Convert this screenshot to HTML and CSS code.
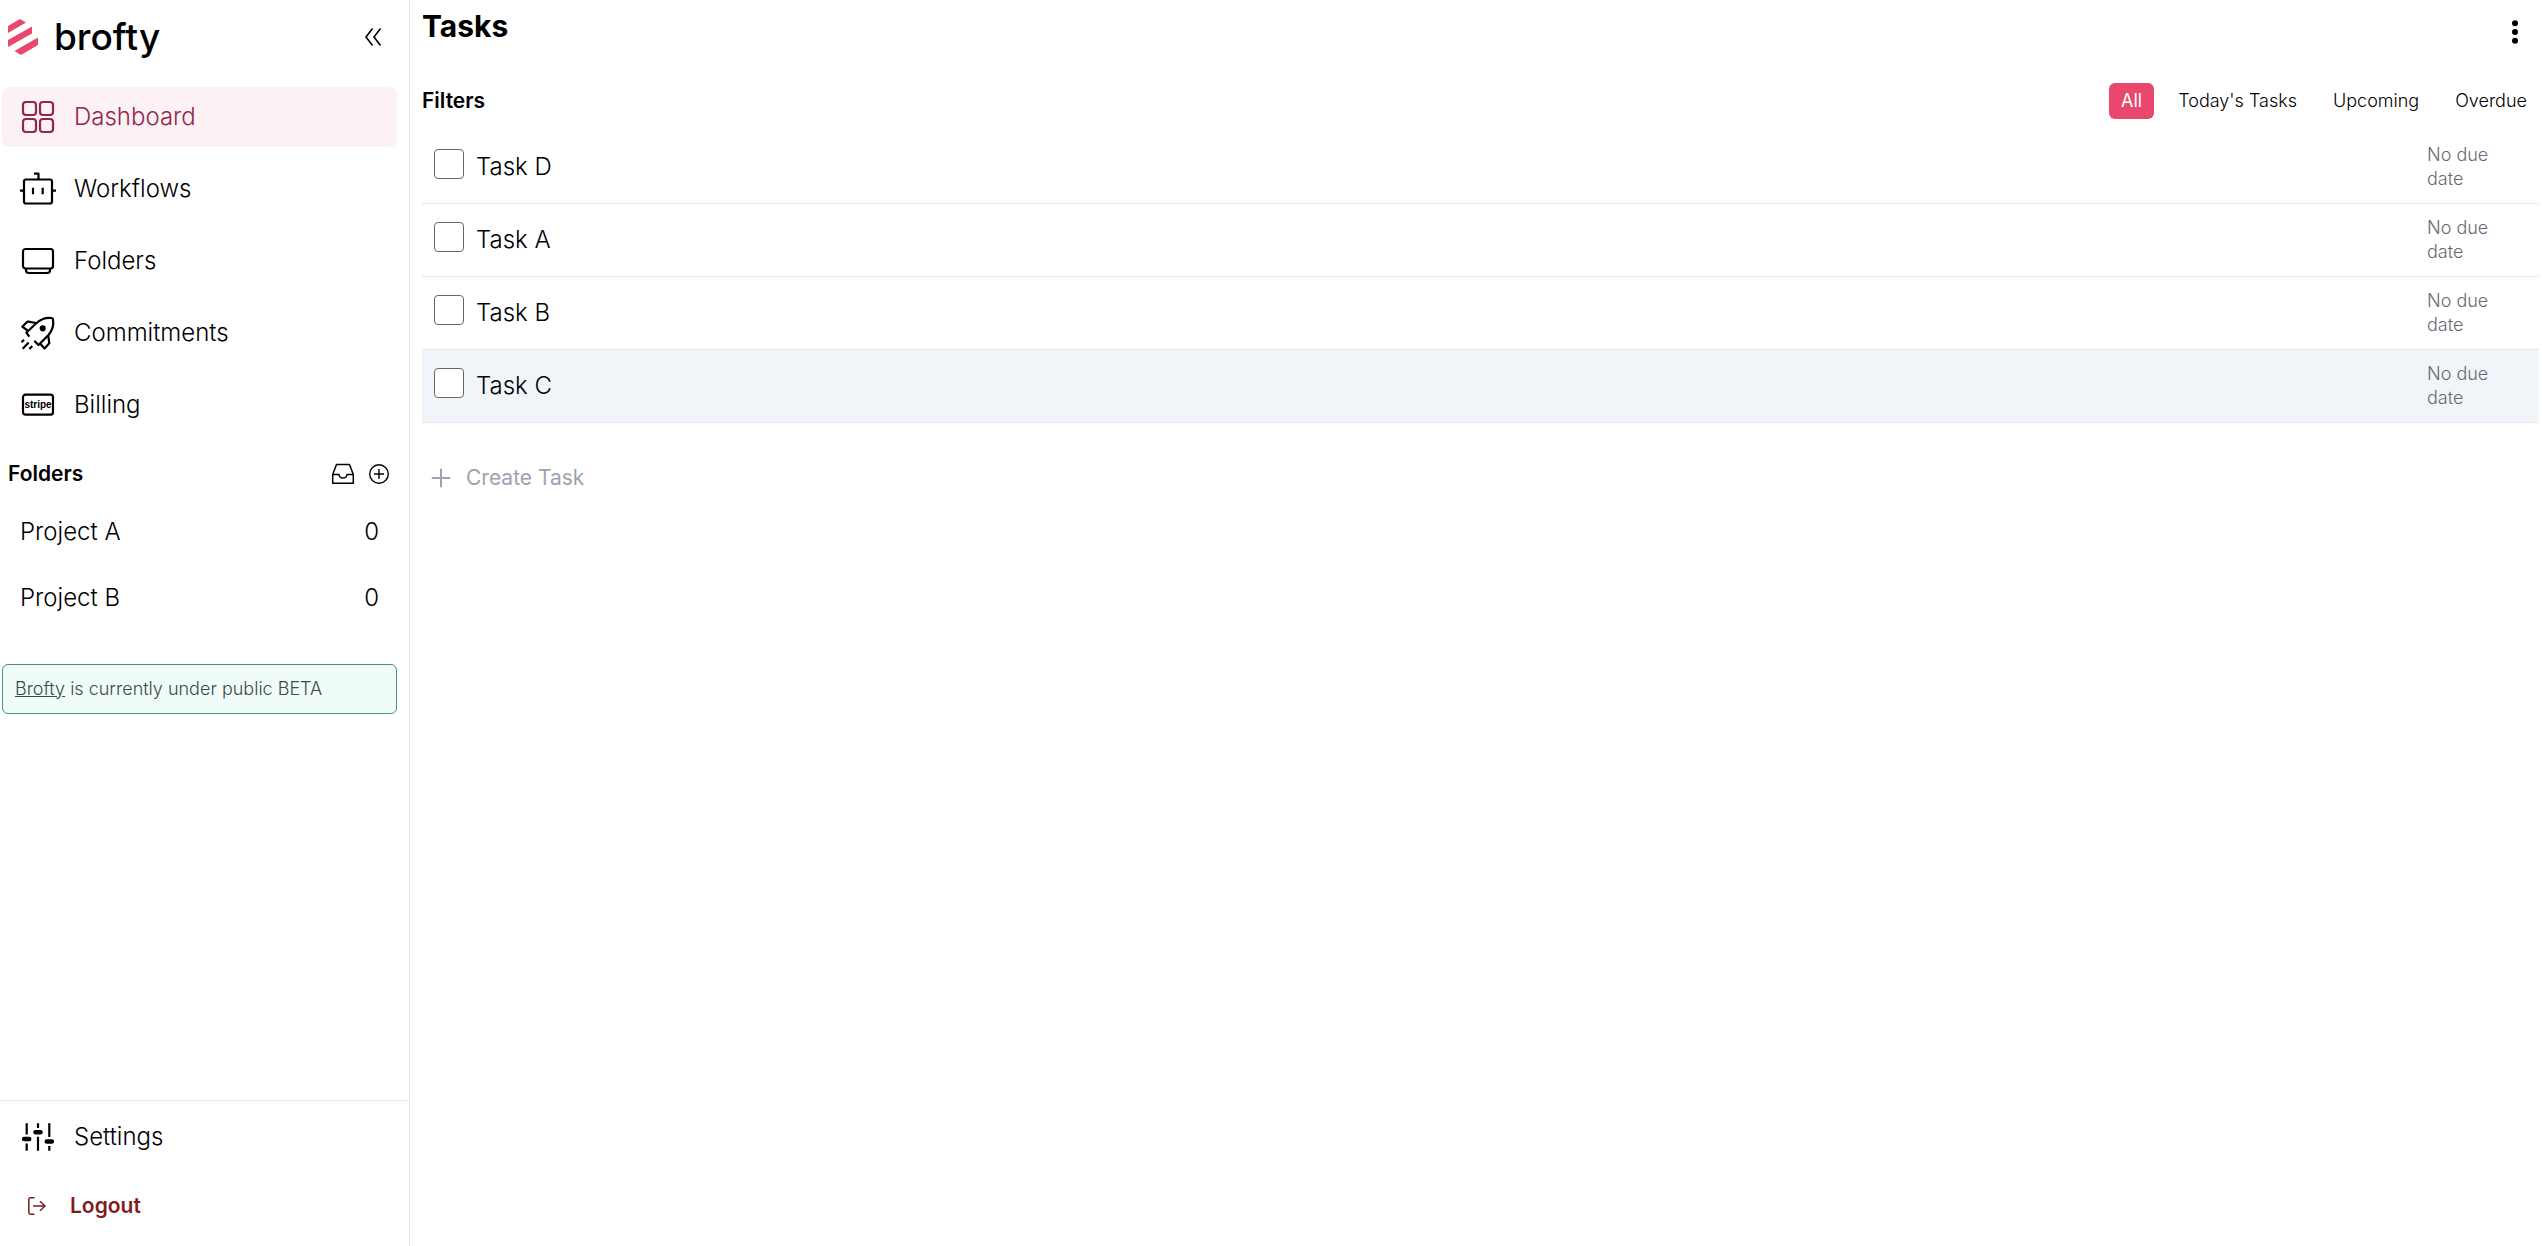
FILE: index.html
```
<!DOCTYPE html>
<html lang="en">
<head>
  <meta charset="UTF-8" />
  <meta name="viewport" content="width=device-width, initial-scale=1.0"/>
  <title>Brofty - Tasks</title>
  <link rel="stylesheet" href="styles.css">
</head>
<body>
  <aside class="sidebar">
    <div class="brand">
      <a class="logo" href="#">
        <svg width="30" height="36" viewBox="0 0 30 36" fill="#ea476f">
          <path d="M0 7 L12 0 L18 3.5 L0 14 Z"/>
          <path d="M0 21 L24 7.5 V14.5 L0 28 Z"/>
          <path d="M6.500 32 L30 18.500 V26 L13 36 Z"/>
        </svg>
        <span>brofty</span>
      </a>
      <button class="icon-btn" aria-label="Collapse sidebar">
        <svg width="20" height="20" viewBox="0 0 20 20" fill="none" stroke="#000" stroke-width="1.600">
          <path d="M9.500 1.500 L3 10 L9.500 18.500 M17.500 1.500 L11 10 L17.500 18.500"/>
        </svg>
      </button>
    </div>

    <nav class="menu">
      <a class="item active" href="#">
        <svg class="icon" viewBox="0 0 36 36">
          <rect x="3" y="3" width="13" height="13" rx="3"/>
          <rect x="20" y="3" width="13" height="13" rx="3"/>
          <rect x="3" y="20" width="13" height="13" rx="3"/>
          <rect x="20" y="20" width="13" height="13" rx="3"/>
        </svg>
        Dashboard
      </a>
      <a class="item" href="#">
        <svg class="icon" viewBox="0 0 36 36">
          <rect x="4" y="8.500" width="28" height="24" rx="2"/>
          <path d="M14 2.700 H18.500 V8 M0 19.700 H4 M32 19.700 H36 M13 16.700 V23.300 M22.700 16.700 V23.300"/>
        </svg>
        Workflows
      </a>
      <a class="item" href="#">
        <svg class="icon" viewBox="0 0 36 36">
          <rect x="3" y="6" width="30" height="19.500" rx="2.500"/>
          <path d="M6 26 V27.500 Q6 30 9 30 H27 Q30 30 30 27.500 V26"/>
        </svg>
        Folders
      </a>
      <a class="item" href="#">
        <svg class="icon" viewBox="0 0 36 36">
          <path d="M9.300 21.700 L6.300 17.700 L16 8.500 C21 4 27 2.300 31.500 3 Q33 3 33 5 C34 10 32.500 15 28.500 20 L18.500 30 L14.300 25.700"/>
          <path d="M16 8 L8.500 6.700 Q7.300 6.600 6.500 7.500 L2.300 11.700 L7.500 15.500"/>
          <path d="M28.300 21 L29.300 28.300 L24.500 33.500 L20.500 29"/>
          <circle cx="22.700" cy="13.300" r="2" fill="currentColor"/>
          <path d="M1.500 27.300 L4 24.800 M2.700 33.700 L8.700 27.500 M9.300 34 L12.300 31"/>
        </svg>
        Commitments
      </a>
      <a class="item" href="#">
        <svg class="icon" viewBox="0 0 36 36">
          <rect x="3" y="7.700" width="30" height="20" rx="2.500"/>
          <text class="stripe" x="18" y="21" text-anchor="middle">stripe</text>
        </svg>
        Billing
      </a>
    </nav>

    <div class="folders-head">
      <h2 class="subtitle">Folders</h2>
      <div class="folder-actions">
        <button class="icon-btn" aria-label="Inbox">
          <svg width="24" height="24" viewBox="0 0 24 24" fill="none" stroke="#000" stroke-width="1.500" stroke-linejoin="round">
            <path d="M1.700 12.500 L5.500 2.500 H18.500 L22.300 12.500 V21.300 H1.700 Z M1.700 12.500 H8 C8.500 17.200 15.500 17.200 16 12.500 H22.300"/>
          </svg>
        </button>
        <button class="icon-btn" aria-label="New folder">
          <svg width="24" height="24" viewBox="0 0 24 24" fill="none" stroke="#000" stroke-width="1.400">
            <circle cx="12" cy="12" r="9.300"/>
            <path d="M12 7 V17 M7 12 H17"/>
          </svg>
        </button>
      </div>
    </div>

    <div class="folders">
      <a class="folder" href="#"><span>Project A</span><span>0</span></a>
      <a class="folder" href="#"><span>Project B</span><span>0</span></a>
    </div>

    <p class="beta"><a href="#">Brofty</a> is currently under public BETA</p>

    <div class="bottom">
      <a class="item" href="#">
        <svg class="icon" viewBox="0 0 36 36">
          <path d="M6.700 4.300 V15.500 M6.700 24.500 V31.700 M18 4.300 V9 M18 17.700 V31.700 M29.300 4.300 V18 M29.300 27 V31.700"/>
          <path class="knobs" d="M4.200 20 H9.200 M15.500 13.300 H20.500 M26.800 22.500 H31.800"/>
        </svg>
        Settings
      </a>
      <button class="logout">
        <svg width="18" height="18" viewBox="0 0 18 18" fill="none" stroke="currentColor" stroke-width="1.500">
          <path d="M6.500 0.800 H2.500 Q0.800 0.800 0.800 2.500 V15.500 Q0.800 17.200 2.500 17.200 H6.500 M5 9 H17 M12 4.200 L17 9 L12 13.800"/>
        </svg>
        Logout
      </button>
    </div>
  </aside>

  <main class="content">
    <header class="top">
      <h1>Tasks</h1>
      <button class="icon-btn" aria-label="More options">
        <svg width="24" height="24" viewBox="0 0 24 24">
          <circle cx="12" cy="3.200" r="3"/>
          <circle cx="12" cy="12" r="3"/>
          <circle cx="12" cy="20.800" r="3"/>
        </svg>
      </button>
    </header>

    <div class="filters">
      <h2 class="subtitle">Filters</h2>
      <div class="filter-list">
        <button class="filter selected">All</button>
        <button class="filter">Today's Tasks</button>
        <button class="filter">Upcoming</button>
        <button class="filter">Overdue</button>
      </div>
    </div>

    <ul class="tasks">
      <li class="task">
        <input type="checkbox" id="task-d">
        <label for="task-d">Task D</label>
        <span class="due">No due date</span>
      </li>
      <li class="task">
        <input type="checkbox" id="task-a">
        <label for="task-a">Task A</label>
        <span class="due">No due date</span>
      </li>
      <li class="task">
        <input type="checkbox" id="task-b">
        <label for="task-b">Task B</label>
        <span class="due">No due date</span>
      </li>
      <li class="task current">
        <input type="checkbox" id="task-c">
        <label for="task-c">Task C</label>
        <span class="due">No due date</span>
      </li>
    </ul>

    <button class="create">
      <svg width="20" height="20" viewBox="0 0 20 20" fill="none" stroke="currentColor" stroke-width="2">
        <path d="M10 0.800 V19.200 M0.800 10 H19.200"/>
      </svg>
      Create Task
    </button>
  </main>
</body>
</html>
```
FILE: styles.css
```
* {
  box-sizing: border-box;
}
body {
  margin: 0;
  font-family: Inter, sans-serif;
  font-weight: 300;
  font-size: 24px;
  line-height: 36px;
  color: #000;
  background: #fff;
  display: flex;
  min-height: 100vh;
}
h1, h2, p, ul {
  margin: 0;
  padding: 0;
}
a {
  color: inherit;
  text-decoration: none;
}
button {
  font: inherit;
  color: inherit;
  background: none;
  border: none;
  padding: 0;
  cursor: pointer;
}
svg {
  display: block;
  flex-shrink: 0;
}

/* sidebar */
.sidebar {
  width: 410px;
  flex-shrink: 0;
  border-right: 1px solid #e5e7eb;
  display: flex;
  flex-direction: column;
}
.brand {
  display: flex;
  align-items: center;
  justify-content: space-between;
  height: 74px;
  padding: 0 26px 0 8px;
}
.logo {
  display: flex;
  align-items: center;
  gap: 16px;
  font-size: 37px;
  font-weight: 500;
}
.menu {
  display: flex;
  flex-direction: column;
  gap: 12px;
  padding: 13px 12px 0 2px;
}
.item {
  display: flex;
  align-items: center;
  gap: 18px;
  height: 60px;
  padding: 0 18px;
  border-radius: 8px;
}
.item.active {
  background: #fcf1f3;
  color: #932650;
}
.icon {
  width: 36px;
  height: 36px;
  fill: none;
  stroke: currentColor;
  stroke-width: 2.2;
  stroke-linejoin: round;
}
.icon .knobs {
  stroke-width: 4.6;
  stroke-linecap: round;
}
.icon .stripe {
  font: bold 10px "Liberation Sans Narrow", "Liberation Sans", sans-serif;
  fill: currentColor;
  stroke: none;
}
.subtitle {
  font-size: 21px;
  font-weight: 600;
}
.folders-head {
  display: flex;
  align-items: center;
  justify-content: space-between;
  padding: 21px 18px 0 8px;
}
.folder-actions {
  display: flex;
  gap: 12px;
}
.folders {
  padding: 7px 12px 0 2px;
}
.folder {
  display: flex;
  align-items: center;
  justify-content: space-between;
  height: 66px;
  padding: 0 18px;
}
.beta {
  margin: 33px 12px 0 2px;
  padding: 12px;
  border: 1px solid #3f9a6d;
  border-radius: 6px;
  background: #effcf8;
  color: #3f4a48;
  font-size: 18px;
  line-height: 24px;
}
.beta a {
  text-decoration: underline;
}
.bottom {
  margin-top: auto;
  border-top: 1px solid #e5e7eb;
  padding: 6px 12px 10px 2px;
}
.logout {
  display: flex;
  align-items: center;
  gap: 24px;
  width: 100%;
  height: 60px;
  margin-top: 9px;
  padding: 0 26px;
  color: #7f1d1d;
  font-size: 21px;
  font-weight: 600;
}

/* tasks */
.content {
  flex: 1;
  padding: 0 3px 0 12px;
}
.top {
  display: flex;
  align-items: flex-end;
  justify-content: space-between;
  padding: 8px 12px 0 0;
}
h1 {
  font-size: 30px;
  font-weight: 700;
}
.filters {
  display: flex;
  align-items: center;
  justify-content: space-between;
  margin-top: 39px;
}
.filter-list {
  display: flex;
  gap: 12px;
}
.filter {
  height: 36px;
  padding: 0 12px;
  border-radius: 6px;
  font-size: 18px;
}
.filter.selected {
  background: #ea476f;
  color: #fff;
  font-weight: 400;
}
.tasks {
  list-style: none;
  margin-top: 12px;
}
.task {
  display: flex;
  align-items: center;
  gap: 12px;
  padding: 12px;
  border-bottom: 1px solid #e5e7eb;
}
.task.current {
  background: #f1f5f9;
}
.task input {
  appearance: none;
  width: 30px;
  height: 30px;
  margin: 0 0 6px;
  border: 1px solid #666;
  border-radius: 4px;
  background: #fff;
}
.task label {
  flex: 1;
}
.due {
  width: 100px;
  padding-right: 24px;
  font-size: 18px;
  line-height: 24px;
  color: #666b73;
}
.create {
  display: flex;
  align-items: center;
  gap: 15px;
  margin-top: 37px;
  padding: 0 9px;
  font-size: 21px;
  font-weight: 400;
  color: #9ca3af;
}
```
